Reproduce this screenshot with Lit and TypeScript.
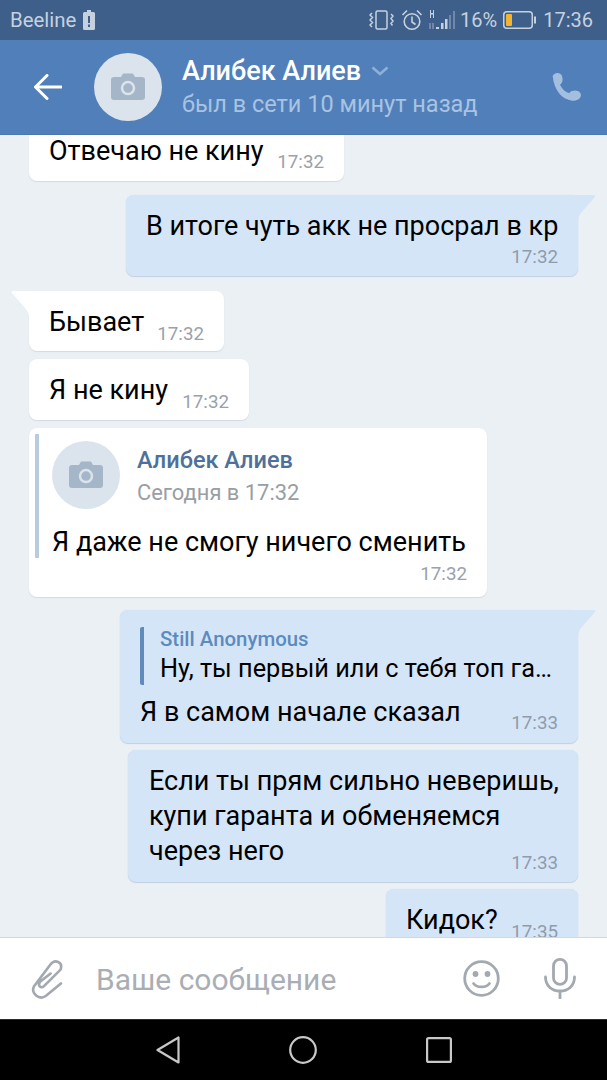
import { LitElement, html, css } from "lit";
import { customElement } from "lit/decorators.js";

const camera = (w: number, color: string, hole: string) => html`<svg width=${w} height=${w * 0.8} viewBox="0 0 34 27"><path fill=${color} d="M3 4h7l2-3.500h10l2 3.500h7a3 3 0 0 1 3 3v17a3 3 0 0 1-3 3H3a3 3 0 0 1-3-3V7a3 3 0 0 1 3-3z"/><circle cx="17" cy="15" r="6" fill="none" stroke=${hole} stroke-width="2.500"/></svg>`;

const tailR = html`<svg class="tail r" viewBox="0 0 26 28"><path fill="#d5e5f8" d="M0 0H24Q26 0 25 2L12 17Q8 21 8 27V28H0z"/></svg>`;
const tailL = html`<svg class="tail l" viewBox="0 0 26 28"><path fill="#fff" d="M26 0H2Q0 0 1 2L14 17Q18 21 18 27V28H26z"/></svg>`;

@customElement("app-root")
export class AppRoot extends LitElement {
  static styles = css`
    :host { display: block; width: 607px; height: 1080px; overflow: hidden; font-family: Roboto, "Noto Sans", sans-serif; color: #000; }
    .page { display: flex; flex-direction: column; height: 1080px; }
    .status { height: 40px; flex: none; background: #3e5f8a; display: flex; align-items: center; padding: 0 14px 0 10px; color: #c6d1df; font-size: 20.400px; }
    .status .bat-warn { margin-left: 7px; }
    .status .spacer { flex: 1; }
    .status svg { display: block; flex: none; }
    .status .pct { font-size: 20px; margin-left: 5px; }
    .status .clock { font-size: 20px; margin-left: 7px; }
    .head { height: 95px; flex: none; background: #507fb9; display: flex; align-items: center; padding: 0 25px 0 34px; box-sizing: border-box; border-bottom: 1px solid #4b78ae; }
    .head .back { margin-right: 32px; }
    .avatar { width: 68px; height: 68px; border-radius: 50%; flex: none; display: flex; align-items: center; justify-content: center; }
    .head .avatar { background: #dbe3ec; margin-right: 20px; }
    .who { flex: 1; display: flex; flex-direction: column; gap: 4px; margin-top: -1px; }
    .name { color: #fff; font-size: 27px; font-weight: 500; line-height: 30px; display: flex; align-items: center; gap: 10px; }
    .seen { color: #a9c3e2; font-size: 23.500px; line-height: 28px; }
    .msgs { flex: 1; min-height: 0; overflow: hidden; background: #ebf0f5; display: flex; flex-direction: column; padding-right: 29px; padding-left: 29px; }
    .b { position: relative; box-sizing: border-box; flex: none; border-radius: 8px; align-self: flex-start; background: #fff; box-shadow: 0 1px 1px #d3dae3, 0 0 1px #dfe5ec; font-size: 27px; line-height: 34px; }
    .b.out { align-self: flex-end; background: #d5e5f8; box-shadow: 0 1px 1px #bfcfe2, 0 0 1px #c8d7ea; }
    .row { display: flex; justify-content: space-between; align-items: flex-start; white-space: nowrap; }
    .t { color: #9aa1aa; font-size: 18.800px; line-height: 20px; flex: none; }
    .out .t { color: #8f9cab; }
    .tail { position: absolute; top: 0; width: 26px; height: 28px; }
    .tail.l { left: -18px; }
    .tail.r { right: -18px; }
    .m1 { margin-top: -14px; width: 315px; height: 60px; padding: 13px 20px 0; }
    .m1 .t { margin-top: 18px; }
    .m2 { margin-top: 14px; width: 452px; height: 81px; padding: 14px 20px 0; white-space: nowrap; }
    .m2 .t { text-align: right; margin-top: 4px; }
    .m3 { margin-top: 15px; width: 195px; height: 60px; padding: 14px 20px 0; }
    .m3 .t { margin-top: 19px; }
    .m4 { margin-top: 8px; width: 220px; height: 61px; padding: 14px 20px 0; }
    .m4 .t { margin-top: 19px; }
    .m5 { margin-top: 8px; width: 458px; height: 169px; padding: 6px 20px 0 6px; }
    .m5 .t { text-align: right; margin-top: 6px; }
    .quote { border-left: 4px solid #b9cbde; padding-left: 13px; height: 124px; box-sizing: border-box; }
    .q-head { display: flex; gap: 17px; padding-top: 7px; }
    .q-head .avatar { background: #dbe3ec; }
    .q-name { color: #4d719b; font-size: 23.500px; font-weight: 500; line-height: 26px; margin-top: 6px; }
    .q-date { color: #999ea4; font-size: 21.900px; line-height: 26px; margin-top: 7px; }
    .q-text { line-height: 34px; margin-top: 16px; white-space: nowrap; }
    .m6 { margin-top: 13px; width: 458px; height: 133px; padding: 17px 20px 0; }
    .reply { border-left: 4px solid #5f8cbb; padding-left: 16px; height: 58px; display: flex; flex-direction: column; border-radius: 2px; }
    .r-name { color: #5c8bbf; font-size: 20.400px; font-weight: 500; line-height: 24px; }
    .r-text { font-size: 25.300px; line-height: 34px; margin-top: 1px; white-space: nowrap; }
    .m6 .row { margin-top: 10px; }
    .m6 .row .t { margin-top: 18px; }
    .m7 { margin-top: 7px; width: 450px; height: 132px; padding: 14px 20px 0 21px; line-height: 35px; white-space: nowrap; }
    .m7 .t { text-align: right; margin-top: -16px; }
    .m8 { margin-top: 7px; width: 192px; height: 70px; padding: 14px 20px 0; }
    .m8 .t { margin-top: 19px; }
    .compose { height: 82px; flex: none; box-sizing: border-box; background: #fff; border-top: 1px solid #d3d8de; display: flex; align-items: center; padding: 0 31px 0 30px; }
    .compose .ph { flex: 1; margin-left: 31px; font-size: 30px; line-height: 36px; padding-top: 2px; color: #a9aeb4; white-space: nowrap; }
    .compose .smile { margin-right: 44px; }
    .nav { height: 61px; flex: none; background: #000; display: flex; align-items: center; justify-content: center; gap: 109px; border-top: 1px solid #2c2c2c; box-sizing: border-box; }
  `;

  render() {
    return html`<div class="page">
      <div class="status">
        <span>Beeline</span>
        <svg class="bat-warn" width="12" height="20" viewBox="0 0 12 20"><path fill="#c6d1df" d="M4 0h4v2h2.500A1.500 1.500 0 0 1 12 3.500v15A1.500 1.500 0 0 1 10.500 20h-9A1.500 1.500 0 0 1 0 18.500v-15A1.500 1.500 0 0 1 1.500 2H4z"/><path fill="#3e5f8a" d="M5 6h2v7H5zM5 14.500h2v2.500H5z"/></svg>
        <span class="spacer"></span>
        <svg width="25" height="20" viewBox="0 0 25 20" fill="none" stroke="#c6d1df" stroke-width="1.500"><rect x="7" y="1" width="11" height="18" rx="1.500"/><path d="M3 3l-2 2 2.500 2.500L1 10l2.500 2.500L1 15l2 2M22 4l2 2-2 2.500 2 2.500-2 2.500 1.500 2"/></svg>
        <svg style="margin-left:7px" width="22" height="22" viewBox="0 0 22 22" fill="none" stroke="#c6d1df" stroke-width="1.600"><circle cx="11" cy="12.500" r="7.800"/><path d="M11 7.500v5.500l3.500 2.500M1.500 6L6 1.500M20.500 6L16 1.500"/></svg>
        <svg style="margin-left:5px" width="27" height="22" viewBox="0 0 27 22"><g fill="#c6d1df"><path d="M2 1h1v3h2V1h1v8H5V5.500H3V9H2zM8 18h3v2H8zM13 14h2.500v6H13zM17 10h2.500v10H17z"/></g><g fill="#6f88a8"><path d="M21 6h2v14h-2zM25 2h2v18h-2zM1 14h2v6H1zM4 14h2v6H4z"/></g></svg>
        <span class="pct">16%</span>
        <svg style="margin-left:6px" width="33" height="18" viewBox="0 0 33 18"><rect x="0.750" y="0.750" width="28.500" height="16.500" rx="3" fill="none" stroke="#c6d1df" stroke-width="1.500"/><rect x="3" y="3" width="6" height="12" rx="1" fill="#f2b52f"/><rect x="31" y="5.500" width="2" height="7" fill="#c6d1df"/></svg>
        <span class="clock">17:36</span>
      </div>
      <div class="head">
        <svg class="back" width="28" height="26" viewBox="0 0 28 26" fill="none" stroke="#fff" stroke-width="3" stroke-linecap="round" stroke-linejoin="round"><path d="M27 13H2M13 1.500L1.500 13 13 24.500"/></svg>
        <div class="avatar">${camera(34, "#a5b6c9", "#dbe3ec")}</div>
        <div class="who">
          <div class="name">Алибек Алиев <svg width="18" height="10" viewBox="0 0 18 10" fill="none" stroke="#8fb0d8" stroke-width="2.600"><path d="M1.500 1.500L9 8l7.500-6.500"/></svg></div>
          <div class="seen">был в сети 10 минут назад</div>
        </div>
        <svg width="30" height="30" viewBox="68 52 90 90"><path fill="#a3bfdf" d="M70 65C72 55 90 50 97 62C102 72 100 85 92 90C100 105 108 112 120 115C128 106 145 105 153 115C160 128 145 140 128 138C100 135 75 110 70 65z"/></svg>
      </div>
      <div class="msgs">
        <div class="b m1"><div class="row"><span>Отвечаю не кину</span><span class="t">17:32</span></div></div>
        <div class="b out m2">${tailR}В итоге чуть акк не просрал в кр<div class="t">17:32</div></div>
        <div class="b m3">${tailL}<div class="row"><span>Бывает</span><span class="t">17:32</span></div></div>
        <div class="b m4"><div class="row"><span>Я не кину</span><span class="t">17:32</span></div></div>
        <div class="b m5">
          <div class="quote">
            <div class="q-head">
              <div class="avatar">${camera(34, "#a5b6c9", "#dbe3ec")}</div>
              <div><div class="q-name">Алибек Алиев</div><div class="q-date">Сегодня в 17:32</div></div>
            </div>
            <div class="q-text">Я даже не смогу ничего сменить</div>
          </div>
          <div class="t">17:32</div>
        </div>
        <div class="b out m6">${tailR}
          <div class="reply"><div class="r-name">Still Anonymous</div><div class="r-text">Ну, ты первый или с тебя топ га…</div></div>
          <div class="row"><span>Я в самом начале сказал</span><span class="t">17:33</span></div>
        </div>
        <div class="b out m7">Если ты прям сильно неверишь,<br />купи гаранта и обменяемся<br />через него<div class="t">17:33</div></div>
        <div class="b out m8"><div class="row"><span>Кидок?</span><span class="t">17:35</span></div></div>
      </div>
      <div class="compose">
        <svg width="35" height="43" viewBox="30 20 105 130" fill="none" stroke="#a3a9b0" stroke-width="8" stroke-linecap="round"><path d="M123 100L78 137C58 152 30 130 42 108L92 42C105 25 130 35 122 58L72 108C62 118 52 105 60 95L92 70"/></svg>
        <span class="ph">Ваше сообщение</span>
        <svg class="smile" width="37" height="37" viewBox="0 0 37 37" fill="none" stroke="#a3a9b0" stroke-width="2.800"><circle cx="18.500" cy="18.500" r="16.800"/><circle cx="12.500" cy="14" r="1.500" fill="#a3a9b0"/><circle cx="24.500" cy="14" r="1.500" fill="#a3a9b0"/><path stroke-linecap="round" d="M10.500 23.500c3.500 4.500 12.500 4.500 16 0"/></svg>
        <svg width="32" height="41" viewBox="0 0 32 41" fill="none" stroke="#a3a9b0" stroke-width="2.800" stroke-linecap="round"><rect x="9.500" y="1.400" width="13" height="25" rx="6.500"/><path d="M1.500 19c0 8.500 6 14 14.500 14s14.500-5.500 14.500-14M16 33v7"/></svg>
      </div>
      <div class="nav">
        <svg width="24" height="28" viewBox="0 0 24 28" fill="none" stroke="#c8c8c8" stroke-width="2.200" stroke-linejoin="round"><path d="M22.500 1.500v25L1.500 14z"/></svg>
        <svg width="28" height="28" viewBox="0 0 28 28" fill="none" stroke="#c8c8c8" stroke-width="2.200"><circle cx="14" cy="14" r="12.800"/></svg>
        <svg width="26" height="26" viewBox="0 0 26 26" fill="none" stroke="#c8c8c8" stroke-width="2.200"><rect x="1.100" y="1.100" width="23.800" height="23.800" rx="1.500"/></svg>
      </div>
    </div>`;
  }
}
